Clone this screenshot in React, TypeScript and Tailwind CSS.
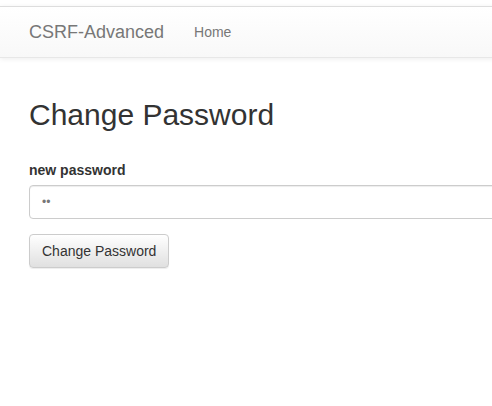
export default function App() {
  return (
    <div className="w-full min-h-[406px] overflow-hidden bg-white pt-[6px] font-['Liberation_Sans',Arial,sans-serif] text-[14px] leading-[20px] text-[#333]">
      <nav className="w-[700px] h-[52px] border-y border-t-[#ddd] border-b-[#e7e7e7] bg-gradient-to-b from-white to-[#f8f8f8] shadow-[0_1px_5px_rgba(0,0,0,0.075)] flex items-center">
        <a className="ml-[14px] px-[15px] py-[15px] text-[18px] leading-[20px] text-[#777]">CSRF-Advanced</a>
        <a className="px-[15px] py-[15px] text-[14px] leading-[20px] text-[#777]">Home</a>
      </nav>
      <main className="w-[700px] px-[29px] pt-[40px]">
        <h1 className="text-[30px] leading-[33px] font-normal text-[#333] mb-[29px]">Change Password</h1>
        <form>
          <div className="mb-[15px]">
            <label className="block font-bold mb-[5px]">new password</label>
            <input
              type="password"
              defaultValue="ab"
              className="block w-[640px] h-[34px] px-[12px] py-[6px] text-[12px] text-[#777] bg-white border border-[#ccc] rounded-[4px] shadow-[inset_0_1px_1px_rgba(0,0,0,0.075)] outline-none"
            />
          </div>
          <button
            type="button"
            className="h-[34px] px-[12px] py-[6px] text-[14px] leading-[20px] text-[#333] border border-[#ccc] rounded-[4px] bg-gradient-to-b from-white to-[#e0e0e0] shadow-[inset_0_1px_0_rgba(255,255,255,0.15),0_1px_1px_rgba(0,0,0,0.075)]"
          >
            Change Password
          </button>
        </form>
      </main>
    </div>
  );
}
